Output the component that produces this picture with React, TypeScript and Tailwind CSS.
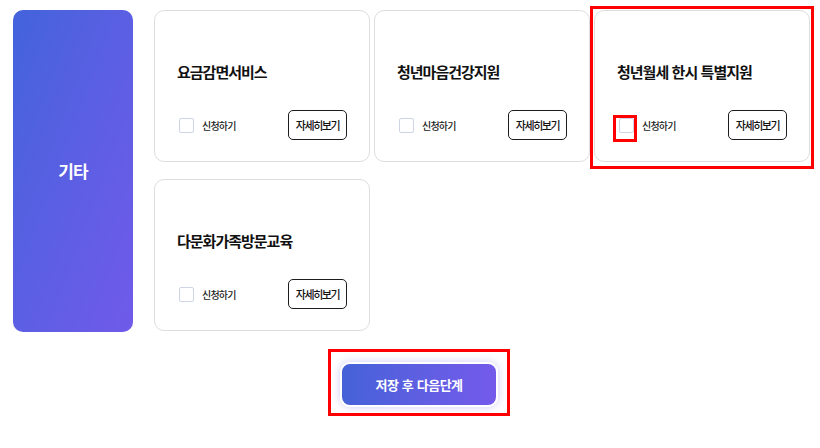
import React from 'react';

const CARDS = [
  { title: '요금감면서비스', marked: false },
  { title: '청년마음건강지원', marked: false },
  { title: '청년월세 한시 특별지원', marked: true },
  { title: '다문화가족방문교육', marked: false },
];

function ServiceCard({ title, marked }: { title: string; marked: boolean }) {
  return (
    <div className="relative h-[152px]">
      <div className="flex h-full flex-col rounded-[10px] border border-[#dedede] bg-white px-[22px] pt-[49px] pb-[21px]">
        <h3 className="text-[15px] font-bold leading-[24px] tracking-[-1px] [word-spacing:1px] text-[#111]">{title}</h3>
        <div className="mt-auto flex items-center justify-between">
          <label className="flex items-center gap-[8px] pl-[2px]">
            <span className="relative block h-[15px] w-[15px] rounded-[2px] border border-[#cdd4e3] bg-white">
              {marked && <span className="absolute -top-[4px] -left-[7px] -right-[4px] -bottom-[10px] border-[3px] border-[#ff0000]" />}
            </span>
            <span className="text-[10px] font-medium tracking-[-0.8px] text-[#222]">신청하기</span>
          </label>
          <button className="h-[30px] w-[59px] rounded-[5px] border border-[#1c1c1c] bg-white text-[11px] font-medium tracking-[-1.4px] text-[#111]">
            자세히보기
          </button>
        </div>
      </div>
      {marked && <div className="pointer-events-none absolute -top-[4px] -left-[4px] -right-[4px] -bottom-[7px] border-[3px] border-[#ff0000]" />}
    </div>
  );
}

export default function App() {
  return (
    <div className="h-[448px] w-[820px] bg-white font-['Noto_Sans_CJK_KR','Noto_Sans',sans-serif]">
      <div className="flex items-start gap-[21px] pt-[10px] pl-[13px]">
        <div className="flex h-[322px] w-[120px] items-center justify-center rounded-[10px] bg-linear-to-br from-[#4263dc] to-[#705aea]">
          <span className="text-[17px] font-bold tracking-[-1px] text-white">기타</span>
        </div>
        <div className="grid grid-cols-[repeat(3,216px)] gap-x-[4px] gap-y-[17px]">
          {CARDS.map((c) => (
            <ServiceCard key={c.title} title={c.title} marked={c.marked} />
          ))}
        </div>
      </div>
      <div className="mt-[30px] flex justify-center pl-[18px]">
        <div className="relative">
          <button className="h-[45px] w-[158px] rounded-[10px] border-2 border-white bg-linear-to-r from-[#4462d8] to-[#745aeb] text-[13px] font-bold tracking-[-0.5px] [word-spacing:1px] text-white shadow-[0_0_8px_rgba(100,90,230,0.3)]">
            저장 후 다음단계
          </button>
          <div className="pointer-events-none absolute -top-[13px] -left-[12px] -right-[12px] -bottom-[9px] border-[3px] border-[#ff0000]" />
        </div>
      </div>
    </div>
  );
}
